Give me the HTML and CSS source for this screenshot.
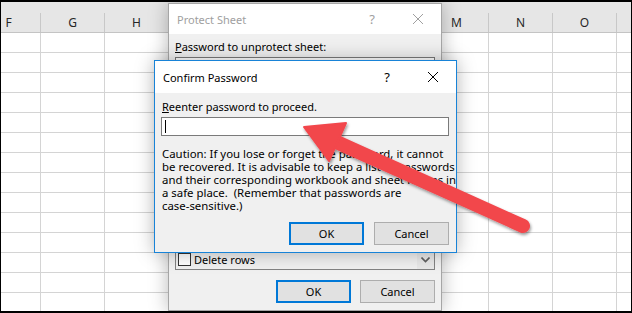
FILE: index.html
```html
<!DOCTYPE html>
<html lang="en">

<head>
  <meta charset="UTF-8" />
  <title>Protect Sheet</title>
  <link rel="stylesheet" href="styles.css">
</head>

<body>

  <div class="screen">
    <!-- worksheet behind the dialogs -->
    <div class="sheet">
      <div class="col-head">
        <div class="col">F</div>
        <div class="col">G</div>
        <div class="col">H</div>
        <div class="col">I</div>
        <div class="col">J</div>
        <div class="col">K</div>
        <div class="col">L</div>
        <div class="col">M</div>
        <div class="col">N</div>
        <div class="col">O</div>
        <div class="col"></div>
      </div>
      <div class="cells"></div>
    </div>

    <!-- Protect Sheet (inactive) -->
    <div class="dialog protect">
      <div class="titlebar">
        <span class="title">Protect Sheet</span>
        <span class="help">?</span>
        <span class="close">
          <svg width="10" height="10" viewBox="0 0 10 10"><path d="M0 0L10 10M10 0L0 10" stroke="currentColor" stroke-width="1" /></svg>
        </span>
      </div>
      <div class="dialog-body">
        <div class="label"><u>P</u>assword to unprotect sheet:</div>
        <div class="textbox tall"></div>
        <div class="listbox">
          <div class="items">
            <div class="item"><span class="check"></span>Delete rows</div>
          </div>
          <div class="scrollbar">
            <svg width="9" height="6" viewBox="0 0 9 6"><path d="M0.5 0.5L4.5 4.5L8.5 0.5" fill="none" stroke="#606060" stroke-width="1.6" /></svg>
          </div>
        </div>
        <div class="buttons">
          <button class="btn default">OK</button>
          <button class="btn">Cancel</button>
        </div>
      </div>
    </div>

    <!-- Confirm Password (active) -->
    <div class="dialog confirm">
      <div class="titlebar">
        <span class="title">Confirm Password</span>
        <span class="help">?</span>
        <span class="close">
          <svg width="10" height="10" viewBox="0 0 10 10"><path d="M0 0L10 10M10 0L0 10" stroke="currentColor" stroke-width="1" /></svg>
        </span>
      </div>
      <div class="dialog-body">
        <div class="label indent"><u>R</u>eenter password to proceed.</div>
        <div class="textbox"><span class="caret"></span></div>
        <p class="caution">
          Caution: If you lose or forget the password, it cannot<br>
          be recovered. It is advisable to keep a list of passwords<br>
          and their corresponding workbook and sheet names in<br>
          a safe place.&nbsp; (Remember that passwords are<br>
          case-sensitive.)
        </p>
        <div class="buttons">
          <button class="btn default">OK</button>
          <button class="btn">Cancel</button>
        </div>
      </div>
    </div>

    <svg class="arrow" width="632" height="313" viewBox="0 0 632 313">
      <defs>
        <filter id="shadow" x="-10%" y="-10%" width="130%" height="130%">
          <feDropShadow dx="1" dy="2" stdDeviation="1.5" flood-color="#000" flood-opacity="0.4" />
        </filter>
      </defs>
      <g filter="url(#shadow)" fill="#f2464c" stroke="#f2464c">
        <line x1="523" y1="226" x2="332" y2="140" stroke-width="14" stroke-linecap="round" />
        <polygon points="304,127 346,123 329,161" stroke-width="2" stroke-linejoin="round" />
      </g>
    </svg>
  </div>

</body>

</html>
```

FILE: styles.css
```css
body {
  margin: 0;
  font-family: 'Segoe UI', 'Noto Sans', sans-serif;
  color: #000;
}

.screen {
  position: relative;
  width: 630px;
  height: 309px;
  border: 1px solid #000;
  border-top-width: 2px;
  border-bottom-width: 2px;
  overflow: hidden;
  background: #fff;
}

/* worksheet */
.col-head {
  display: flex;
  height: 19px;
  padding-top: 11px;
  background: #e6e6e6;
  border-bottom: 1px solid #c4c4c4;
}

.col {
  flex: 0 0 64px;
  box-sizing: border-box;
  height: 19px;
  border-right: 1px solid #c8c8c8;
  text-align: center;
  font-size: 12px;
  line-height: 19px;
  color: #262626;
}

.col:first-child {
  margin-left: -24px;
}

.cells {
  height: 278px;
  background-image:
    linear-gradient(to right, #d4d4d4 1px, transparent 1px),
    linear-gradient(to bottom, #d4d4d4 1px, transparent 1px);
  background-size: 64px 20px;
  background-position: 39px 19px;
}

/* dialogs */
.dialog {
  position: absolute;
  box-sizing: border-box;
  display: flex;
  flex-direction: column;
  background: #f0f0f0;
  box-shadow: 0 0 18px rgba(0, 0, 0, 0.28);
}

.protect {
  left: 167px;
  top: 1px;
  width: 274px;
  height: 308px;
  border: 1px solid #a6a6a6;
}

.confirm {
  left: 153px;
  top: 58px;
  width: 303px;
  height: 193px;
  border: 1px solid #1883d7;
}

.titlebar {
  display: flex;
  align-items: center;
  height: 30px;
  padding-left: 8px;
  background: #fff;
  font-size: 11px;
}

.confirm .titlebar {
  height: 32px;
}

.title {
  flex: 1;
}

.help,
.close {
  display: flex;
  align-items: center;
  justify-content: center;
  width: 46px;
  font-size: 13px;
}

.protect .titlebar {
  color: #a0a0a0;
}

.dialog-body {
  flex: 1;
  display: flex;
  flex-direction: column;
  padding: 5px 6px 7px 6px;
}

.confirm .dialog-body {
  padding-right: 7px;
}

.label {
  font-size: 11px;
  line-height: 16px;
}

.confirm .label {
  margin-top: 1px;
}

.label.indent {
  padding-left: 1px;
}

.textbox {
  box-sizing: border-box;
  height: 19px;
  margin-top: 2px;
  background: #fff;
  border: 1px solid #7a7a7a;
  display: flex;
  align-items: center;
}

.textbox.tall {
  height: 23px;
}

.caret {
  width: 1px;
  height: 13px;
  margin-left: 3px;
  background: #000;
}

.caution {
  margin: 11px 0 0 1px;
  font-size: 11.4px;
  line-height: 13px;
  white-space: nowrap;
}

.listbox {
  display: flex;
  margin-top: auto;
  height: 90px;
  box-sizing: border-box;
  border: 1px solid #828282;
  background: #f0f0f0;
}

.items {
  flex: 1;
  display: flex;
  flex-direction: column;
  justify-content: flex-end;
  padding: 0 2px 1px 2px;
  overflow: hidden;
}

.item {
  display: flex;
  align-items: center;
  gap: 3px;
  height: 17px;
  font-size: 11px;
}

.check {
  box-sizing: border-box;
  width: 13px;
  height: 13px;
  border: 1px solid #333;
  background: #fff;
}

.scrollbar {
  display: flex;
  align-items: flex-end;
  justify-content: center;
  width: 17px;
  padding-bottom: 6px;
  box-sizing: border-box;
  background: #e8e8e8;
}

.buttons {
  display: flex;
  justify-content: flex-end;
  gap: 10px;
  margin-top: auto;
}

.protect .buttons {
  gap: 9px;
  margin-top: 10px;
}

.btn {
  box-sizing: border-box;
  width: 75px;
  height: 23px;
  padding: 0;
  font-family: inherit;
  font-size: 11px;
  color: #000;
  background: #e1e1e1;
  border: 1px solid #adadad;
}

.btn.default {
  border: 2px solid #0078d7;
}

.arrow {
  position: absolute;
  left: -1px;
  top: -2px;
}
```
